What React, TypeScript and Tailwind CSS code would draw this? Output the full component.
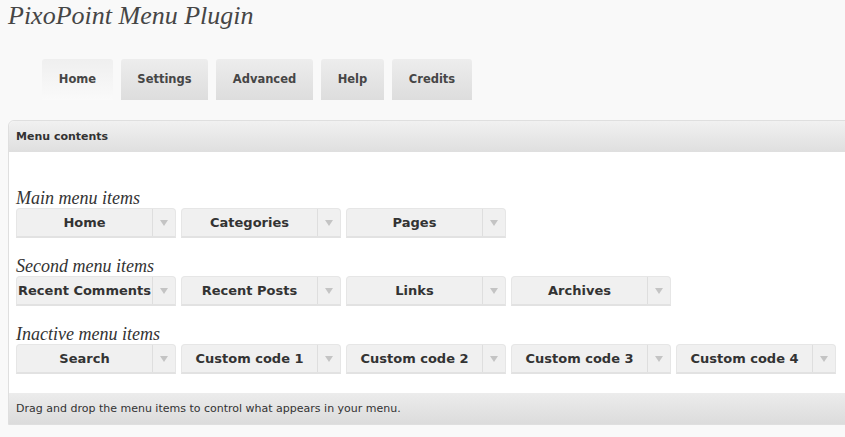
const tabs = [
  { label: "Home", w: "w-[71px]" },
  { label: "Settings", w: "w-[87px]" },
  { label: "Advanced", w: "w-[97px]" },
  { label: "Help", w: "w-[63px]" },
  { label: "Credits", w: "w-[80px]" },
];

const sections = [
  { title: "Main menu items", items: ["Home", "Categories", "Pages"] },
  { title: "Second menu items", items: ["Recent Comments", "Recent Posts", "Links", "Archives"] },
  { title: "Inactive menu items", items: ["Search", "Custom code 1", "Custom code 2", "Custom code 3", "Custom code 4"] },
];

function MenuItem({ label }: { label: string }) {
  return (
    <div className="flex h-[30px] w-[160px] rounded-t-[4px] border border-b-2 border-[#e6e6e6] border-b-[#e2e2e2] bg-[#f0f0f0]">
      <div className="flex flex-1 items-center justify-center whitespace-nowrap border-r border-[#dedede] pt-[1px] text-[13px] font-bold text-[#333]">
        {label}
      </div>
      <div className="flex w-[22px] items-center justify-center pt-[1px]">
        <svg width="8" height="6" viewBox="0 0 8 6">
          <path d="M0 0 L8 0 L4 6 Z" fill="#c4c4c4" />
        </svg>
      </div>
    </div>
  );
}

export default function App() {
  return (
    <div className="h-[437px] w-[845px] overflow-hidden bg-[#f9f9f9] font-['DejaVu_Sans',sans-serif] text-[#333]">
      <h1 className="pl-[8px] pt-[1px] font-['Liberation_Serif',serif] text-[26px] italic leading-[30px] text-[#464646]">
        PixoPoint Menu Plugin
      </h1>

      <div className="mt-[28px] flex gap-[8px] pl-[42px]">
        {tabs.map((t, i) => (
          <div
            key={t.label}
            className={
              i === 0
                ? `flex h-[41px] ${t.w} items-center justify-center rounded-t-[3px] bg-gradient-to-b from-[#efefef] to-[#fafafa] pt-[1px] text-[11.5px] font-bold text-[#464646]`
                : `flex h-[41px] ${t.w} items-center justify-center rounded-t-[3px] bg-gradient-to-b from-[#ededed] to-[#dddddd] pt-[1px] text-[11.5px] font-bold text-[#464646]`
            }
          >
            {t.label}
          </div>
        ))}
      </div>

      <div className="ml-[8px] mt-[20px] w-[860px] rounded-tl-[6px] border border-[#dfdfdf]">
        <div className="flex h-[31px] items-center rounded-tl-[6px] bg-gradient-to-b from-[#f1f1f1] to-[#dfdfdf] pl-[7px] pt-[1px] text-[11px] font-bold text-[#333]">
          Menu contents
        </div>
        <div className="flex flex-col gap-[19px] bg-white pb-[19px] pl-[7px] pt-[37px]">
          {sections.map((s) => (
            <div key={s.title}>
              <div className="font-['Liberation_Serif',serif] text-[18px] italic leading-[19px] text-[#333]">
                {s.title}
              </div>
              <div className="flex gap-[5px]">
                {s.items.map((it) => (
                  <MenuItem key={it} label={it} />
                ))}
              </div>
            </div>
          ))}
        </div>
        <div className="flex h-[31px] items-center bg-gradient-to-b from-[#ececec] to-[#dcdcdc] pl-[7px] pt-[2px] text-[11px] text-[#333]">
          Drag and drop the menu items to control what appears in your menu.
        </div>
      </div>
    </div>
  );
}
